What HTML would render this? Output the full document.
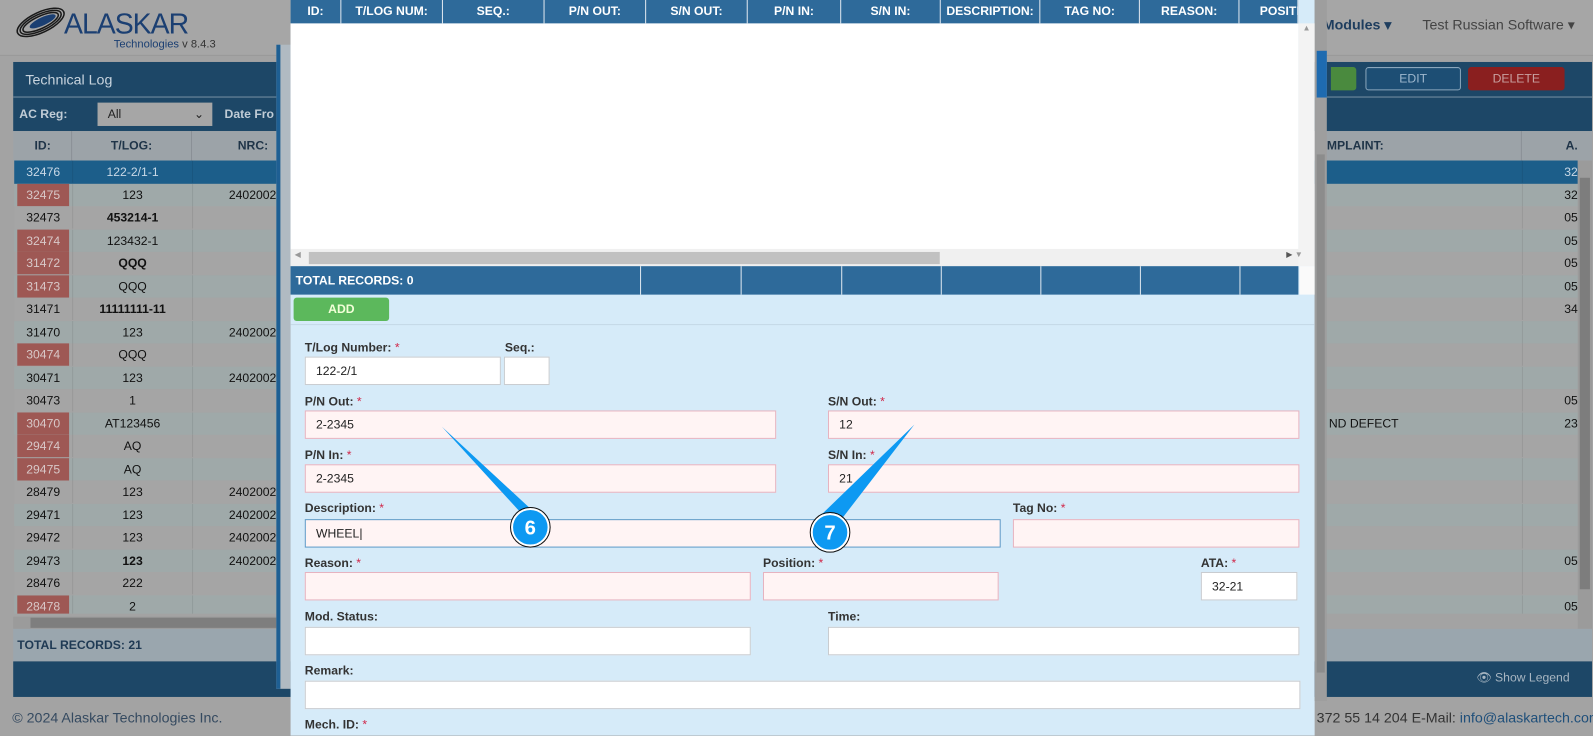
<!DOCTYPE html>
<html><head><meta charset="utf-8"><style>
*{box-sizing:border-box;margin:0;padding:0}
html,body{width:1593px;height:735px;overflow:hidden;background:#a3a3a3}
#w{position:absolute;left:0;top:0;width:1568px;height:724px;transform:scale(1.01595);transform-origin:0 0;font-family:"Liberation Sans",Arial,sans-serif;font-size:12px;color:#222;background:#a3a3a3}
.a{position:absolute;white-space:nowrap}
.row{position:absolute;left:14px;width:1539px;height:22.5px}
.c{position:absolute;top:0;height:22px;line-height:22px;text-align:center;font-size:12px;color:#111;white-space:nowrap}
.red{background:#9e5854;color:#d8c8c8}
.lbl{position:absolute;font-size:12px;font-weight:bold;color:#333;white-space:nowrap}
.lbl b{color:#d0284a;font-weight:normal}
.in{position:absolute;height:28px;background:#fff;border:1px solid #c9ccd0;font-size:12px;line-height:26px;padding-left:10px;color:#222}
.rq{background:#fff4f4;border-color:#e6b3c0}
.th{position:absolute;top:0;height:23px;line-height:22px;color:#fff;font-weight:bold;font-size:12px;text-align:center;border-right:1px solid #e0e8f0;white-space:nowrap;overflow:hidden}
</style></head><body><div id="w">
<div class="a" style="left:0;top:0;width:1568px;height:55px;background:#a6a6a6;border-bottom:1px solid #999"></div>
<svg class="a" style="left:12px;top:4px" width="60" height="36" viewBox="0 0 60 36"><g fill="none" stroke="#1a1a1a" stroke-width="1.5"><ellipse cx="28" cy="18" rx="25" ry="10" transform="rotate(-25 28 18)"/><ellipse cx="28" cy="18" rx="22" ry="8" transform="rotate(-25 28 18)"/><ellipse cx="28" cy="18" rx="19" ry="6" transform="rotate(-25 28 18)"/></g><ellipse cx="30" cy="17" rx="14" ry="4" fill="#1b3f72" transform="rotate(-25 30 17)"/></svg>
<div class="a" style="left:63px;top:8px;font-size:28px;color:#1b3f72;letter-spacing:-1px">ALASKAR</div>
<div class="a" style="left:112px;top:38px;font-size:11px;color:#1b3f72">Technologies <span style="color:#333">v 8.4.3</span></div>
<div class="a" style="left:1302px;top:16px;font-size:14px;font-weight:bold;color:#1e3d5e">Modules ▾</div>
<div class="a" style="left:1400px;top:16px;font-size:14px;color:#444">Test Russian Software ▾</div>
<div class="a" style="left:13px;top:61px;width:1554px;height:68px;background:#1d4767"></div>
<div class="a" style="left:25px;top:70px;font-size:14px;color:#c8d4de">Technical Log</div>
<div class="a" style="left:13px;top:95px;width:1554px;height:1px;background:#7890a4"></div>
<div class="a" style="left:19px;top:105px;font-weight:bold;color:#c0ccd6">AC Reg:</div>
<div class="a" style="left:96px;top:101px;width:113px;height:23px;background:#a6a6a6;padding-left:10px;line-height:22px;color:#222">All<span style="position:absolute;right:8px">⌄</span></div>
<div class="a" style="left:221px;top:105px;font-weight:bold;color:#c0ccd6">Date Fro</div>
<div class="a" style="left:1310px;top:66px;width:25px;height:23px;background:#4a8a3e;border-radius:0 3px 3px 0"></div>
<div class="a" style="left:1344px;top:66px;width:94px;height:23px;border:1px solid #8aa6bc;border-radius:3px;background:#1d4e74;color:#9fb8ce;text-align:center;line-height:21px">EDIT</div>
<div class="a" style="left:1445px;top:66px;width:95px;height:23px;background:#8a1f1f;border-radius:3px;color:#c8a0a0;text-align:center;line-height:23px">DELETE</div>
<div class="a" style="left:13px;top:129px;width:1554px;height:29px;background:#9ca3a8"></div>
<div class="a" style="left:14px;top:129px;width:57px;height:29px;line-height:29px;text-align:center;font-weight:bold;color:#1f3448;border-right:1px solid #8a9096">ID:</div>
<div class="a" style="left:71px;top:129px;width:118px;height:29px;line-height:29px;text-align:center;font-weight:bold;color:#1f3448;border-right:1px solid #8a9096">T/LOG:</div>
<div class="a" style="left:189px;top:129px;width:83px;height:29px;line-height:29px;text-align:right;padding-right:8px;font-weight:bold;color:#1f3448">NRC:</div>
<div class="a" style="left:1306px;top:129px;width:192px;height:29px;line-height:29px;font-weight:bold;color:#1f3448;border-right:1px solid #8a9096">MPLAINT:</div>
<div class="a" style="left:1498px;top:129px;width:55px;height:29px;line-height:29px;text-align:right;font-weight:bold;color:#1f3448">A.</div>
<div id="rows"></div>
<div class="a" style="left:13px;top:607px;width:260px;height:12px;background:#9b9b9b"></div>
<div class="a" style="left:30px;top:608px;width:243px;height:10px;background:#7e7e7e"></div>
<div class="a" style="left:1553px;top:158px;width:14px;height:461px;background:#9b9b9b"></div>
<div class="a" style="left:1555px;top:175px;width:10px;height:405px;background:#7d7d7d"></div>
<div class="a" style="left:13px;top:619px;width:1554px;height:32px;background:#9aa6ae"></div>
<div class="a" style="left:17px;top:628px;font-weight:bold;color:#1f3a54">TOTAL RECORDS: 21</div>
<div class="a" style="left:13px;top:651px;width:1554px;height:35px;background:#1d4767"></div>
<div class="a" style="left:1453px;top:660px;color:#a8b6c2;font-size:12px">👁 Show Legend</div>
<div class="a" style="left:12px;top:698px;font-size:14px;color:#354a60">© 2024 Alaskar Technologies Inc.</div>
<div class="a" style="left:1296px;top:698px;font-size:14px;color:#333">372 55 14 204 E-Mail: <span style="color:#1f4f7a">info@alaskartech.com</span></div>
<div class="a" style="left:272px;top:44px;width:14px;height:634px;background:#b0bac2;border-left:4px solid #1e5f93"></div>
<div class="a" style="left:286px;top:0;width:1008px;height:724px;background:#d6ebf9"></div>
<div class="a" style="left:1294px;top:0;width:12px;height:690px;background:#9e9e9e"></div>
<div class="a" style="left:1296px;top:50px;width:10px;height:46px;background:#1e6bb0"></div>
<div class="a" style="left:1296px;top:152px;width:8px;height:510px;background:#8c8c8c"></div>
<div class="a" style="left:286px;top:0;width:992px;height:262px;background:#fff"></div>
<div class="a" style="left:286px;top:0;width:992px;height:23px;background:#2e6a9a"></div>
<div class="th" style="left:286px;width:50px">ID:</div>
<div class="th" style="left:336px;width:100px">T/LOG NUM:</div>
<div class="th" style="left:436px;width:100px">SEQ.:</div>
<div class="th" style="left:536px;width:100px">P/N OUT:</div>
<div class="th" style="left:636px;width:100px">S/N OUT:</div>
<div class="th" style="left:736px;width:92px">P/N IN:</div>
<div class="th" style="left:828px;width:98px">S/N IN:</div>
<div class="th" style="left:926px;width:98px">DESCRIPTION:</div>
<div class="th" style="left:1024px;width:98px">TAG NO:</div>
<div class="th" style="left:1122px;width:98px">REASON:</div>
<div class="th" style="left:1220px;width:58px;text-align:left;padding-left:20px">POSITI</div>
<div class="a" style="left:1278px;top:23px;width:16px;height:239px;background:#f3f3f3;font-size:8px;color:#999;text-align:center">▲</div>
<div class="a" style="left:286px;top:245px;width:992px;height:17px;background:#f0f0f0"></div>
<div class="a" style="left:304px;top:248px;width:621px;height:12px;background:#c1c1c1"></div>
<div class="a" style="left:290px;top:246px;font-size:8px;color:#999">◀</div>
<div class="a" style="left:1266px;top:246px;font-size:8px;color:#555">▶ <span style="color:#999">▼</span></div>
<div class="a" style="left:286px;top:262px;width:992px;height:28px;background:#2e6a9a"></div>
<div class="a" style="left:630px;top:262px;width:1px;height:28px;background:#dfe8f0;box-shadow:99px 0 #dfe8f0,198px 0 #dfe8f0,296px 0 #dfe8f0,394px 0 #dfe8f0,492px 0 #dfe8f0,590px 0 #dfe8f0"></div>
<div class="a" style="left:291px;top:269px;color:#fff;font-weight:bold">TOTAL RECORDS: 0</div>
<div class="a" style="left:1279px;top:262px;width:15px;height:28px;background:#fafafa"></div>
<div class="a" style="left:289px;top:293px;width:94px;height:23px;background:#5cb85c;border-radius:3px;color:#f2ffd8;font-weight:bold;text-align:center;line-height:22px">ADD</div>
<div class="a" style="left:286px;top:319px;width:1008px;height:1px;background:#c4d8e6"></div>
<div class="lbl" style="left:300px;top:335px">T/Log Number: <b>*</b></div>
<div class="in" style="left:300px;top:351px;width:193px">122-2/1</div>
<div class="lbl" style="left:497px;top:335px">Seq.:</div>
<div class="in" style="left:496px;top:351px;width:45px"></div>
<div class="lbl" style="left:300px;top:388px">P/N Out: <b>*</b></div>
<div class="in rq" style="left:300px;top:404px;width:464px">2-2345</div>
<div class="lbl" style="left:815px;top:388px">S/N Out: <b>*</b></div>
<div class="in rq" style="left:815px;top:404px;width:464px">12</div>
<div class="lbl" style="left:300px;top:441px">P/N In: <b>*</b></div>
<div class="in rq" style="left:300px;top:457px;width:464px">2-2345</div>
<div class="lbl" style="left:815px;top:441px">S/N In: <b>*</b></div>
<div class="in rq" style="left:815px;top:457px;width:464px">21</div>
<div class="lbl" style="left:300px;top:493px">Description: <b>*</b></div>
<div class="in rq" style="left:300px;top:511px;width:685px;border-color:#5b9ac8">WHEEL|</div>
<div class="lbl" style="left:997px;top:493px">Tag No: <b>*</b></div>
<div class="in rq" style="left:997px;top:511px;width:282px"></div>
<div class="lbl" style="left:300px;top:547px">Reason: <b>*</b></div>
<div class="in rq" style="left:300px;top:563px;width:439px"></div>
<div class="lbl" style="left:751px;top:547px">Position: <b>*</b></div>
<div class="in rq" style="left:751px;top:563px;width:232px"></div>
<div class="lbl" style="left:1182px;top:547px">ATA: <b>*</b></div>
<div class="in" style="left:1182px;top:563px;width:95px">32-21</div>
<div class="lbl" style="left:300px;top:600px">Mod. Status:</div>
<div class="in" style="left:300px;top:617px;width:439px"></div>
<div class="lbl" style="left:815px;top:600px">Time:</div>
<div class="in" style="left:815px;top:617px;width:464px"></div>
<div class="lbl" style="left:300px;top:653px">Remark:</div>
<div class="in" style="left:300px;top:670px;width:980px"></div>
<div class="lbl" style="left:300px;top:706px">Mech. ID: <b>*</b></div>
<svg class="a" style="left:0;top:0" width="1568" height="724">
<polygon points="435,420 512,504 530,508" fill="#0d99f2"/>
<circle cx="522" cy="519" r="18" fill="#0d99f2" stroke="#fff" stroke-width="2"/>
<circle cx="522" cy="519" r="19.5" fill="none" stroke="#111" stroke-width="1"/>
<text x="522" y="526" fill="#fff" font-size="20" font-weight="bold" text-anchor="middle" font-family="Liberation Sans">6</text>
<polygon points="900,418 805,510 826,514" fill="#0d99f2"/>
<circle cx="817" cy="524" r="18" fill="#0d99f2" stroke="#fff" stroke-width="2"/>
<circle cx="817" cy="524" r="19.5" fill="none" stroke="#111" stroke-width="1"/>
<text x="817" y="531" fill="#fff" font-size="20" font-weight="bold" text-anchor="middle" font-family="Liberation Sans">7</text>
</svg>
</div>
<script>
var d=[["32476","122-2/1-1","",0,0,"32"],["32475","123","2402002",1,0,"32"],["32473","453214-1","",0,1,"05"],["32474","123432-1","",1,0,"05"],["31472","QQQ","",1,1,"05"],["31473","QQQ","",1,0,"05"],["31471","11111111-11","",0,1,"34"],["31470","123","2402002",0,0,""],["30474","QQQ","",1,0,""],["30471","123","2402002",0,0,""],["30473","1","",0,0,"05"],["30470","AT123456","",1,0,"23"],["29474","AQ","",1,0,""],["29475","AQ","",1,0,""],["28479","123","2402002",0,0,""],["29471","123","2402002",0,0,""],["29472","123","2402002",0,0,""],["29473","123","2402002",0,1,"05"],["28476","222","",0,0,""],["28478","2","",1,0,"05"]];
var h="";d.forEach(function(r,i){var y=158+i*22.5;var bg=i==0?"#1c5e8a":(i%2?"#9fa9a9":"#a5a5a5");var col=i==0?"#c8d8e6":"#111";
h+='<div class="row" style="top:'+y+'px;background:'+bg+(i==19?';height:18px;overflow:hidden':'')+'">';
h+='<div class="c '+(r[3]?'red':'')+'" style="left:'+(r[3]?3:0)+'px;width:'+(r[3]?51:57)+'px;'+(r[3]?'':'color:'+col)+'">'+r[0]+'</div>';
h+='<div class="c" style="left:57px;width:118px;color:'+col+';'+(r[4]?'font-weight:bold':'')+';border-left:1px solid rgba(0,0,0,.08)">'+r[1]+'</div>';
h+='<div class="c" style="left:175px;width:83px;text-align:right;border-left:1px solid rgba(0,0,0,.08)">'+r[2]+'</div>';
if(i==11)h+='<div class="c" style="left:1294px;text-align:left">ND DEFECT</div>';
h+='<div class="c" style="left:1484px;width:55px;text-align:right;overflow:hidden;color:'+col+';border-left:1px solid rgba(0,0,0,.08)">'+r[5]+'</div></div>';});
document.getElementById("rows").innerHTML=h;
</script>
</body></html>
